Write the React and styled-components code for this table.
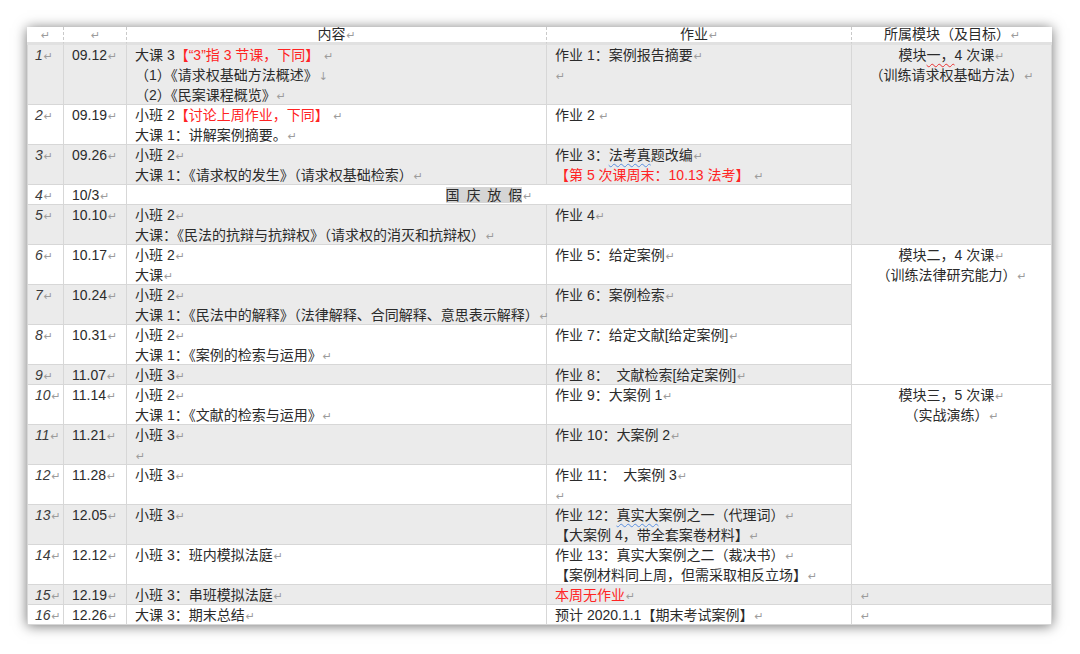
import React from 'react';
import styled, { createGlobalStyle } from 'styled-components';

const GlobalStyle = createGlobalStyle`
  html, body {
    margin: 0;
    padding: 0;
    background: #ffffff;
  }
  body {
    font-family: "Liberation Sans", "Noto Sans CJK SC", sans-serif;
    color: #2b2b2b;
  }
`;

const Page = styled.div`
  width: 1080px;
  height: 654px;
  box-sizing: border-box;
  padding: 27px 0 0 27px;
  overflow: hidden;
`;

const Sheet = styled.div`
  width: 1025px;
  background: #ffffff;
  box-shadow: 0 1px 12px rgba(0, 0, 0, 0.55);
`;

const Table = styled.table`
  width: 1025px;
  table-layout: fixed;
  border-collapse: separate;
  border-spacing: 0;
  font-size: 14px;
`;

const HeadCell = styled.td`
  padding: 0 8px;
  text-align: center;
  background: #ffffff;
  border-right: 1px dashed #c9c9c9;
  border-bottom: 3px solid #e1e1e1;

  &:last-child {
    border-right: none;
  }
`;

const HeadLine = styled.div`
  height: 15px;
  line-height: 15px;
  white-space: nowrap;
  overflow: hidden;
`;

const Cell = styled.td`
  padding: 0 8px;
  vertical-align: top;
  text-align: ${({ $center }) => ($center ? 'center' : 'left')};
  background: ${({ $shade }) => ($shade ? '#ebebeb' : '#ffffff')};
  border-right: 1px solid #d7d7d7;
  border-bottom: 1px solid #d7d7d7;
`;

const NumCell = styled(Cell)`
  padding-left: 7px;
  font-style: italic;
  white-space: nowrap;
  color: #3a3a3a;
  border-left: 1px solid #d7d7d7;
`;

const DateCell = styled(Cell)`
  padding-left: 8px;
  white-space: nowrap;
`;

const Line = styled.div`
  white-space: nowrap;
  height: 20px;
  line-height: 20px;

  &:last-child {
    height: 19px;
  }
`;

const Red = styled.span`
  color: #ff2424;
`;

const Squiggle = styled.span`
  text-decoration: underline wavy ${({ color }) => color};
  text-decoration-thickness: 1px;
  text-underline-offset: 3px;
`;

const Holiday = styled.span`
  background: #d5d5d5;
  word-spacing: 3px;
`;

const MarkGlyph = styled.span`
  font-family: "DejaVu Sans", sans-serif;
  font-style: normal;
  font-size: 11px;
  color: #9c9c9c;
  margin-left: 1px;
`;

// paragraph mark shown by Word (↵ / ↓)
const Mark = ({ br }) => <MarkGlyph>{br ? '↓' : '↵'}</MarkGlyph>;

const rows = [
  {
    n: '1', date: '09.12', shade: true,
    content: [
      <>大课 3<Red>【“3”指 3 节课，下同】</Red> <Mark /></>,
      <>（1）《请求权基础方法概述》<Mark br /></>,
      <>（2）《民案课程概览》<Mark /></>,
    ],
    work: [<>作业 1：案例报告摘要<Mark /></>, <Mark />],
    module: {
      span: 5, shade: true, center: true,
      lines: [
        <>模块<Squiggle color="#e83030">一，</Squiggle>4 次课<Mark /></>,
        <>（训练请求权基础方法）<Mark /></>,
      ],
    },
  },
  {
    n: '2', date: '09.19',
    content: [
      <>小班 2<Red>【讨论上周作业，下同】</Red> <Mark /></>,
      <>大课 1：讲解案例摘要。<Mark /></>,
    ],
    work: [<>作业 2 <Mark /></>],
  },
  {
    n: '3', date: '09.26', shade: true,
    content: [<>小班 2<Mark /></>, <>大课 1：《请求权的发生》（请求权基础检索）<Mark /></>],
    work: [
      <>作业 3：<Squiggle color="#5a8fe0">法考真</Squiggle>题改编<Mark /></>,
      <><Red>【第 5 次课周末：10.13 法考】</Red> <Mark /></>,
    ],
  },
  { n: '4', date: '10/3', holiday: '国 庆 放 假' },
  {
    n: '5', date: '10.10', shade: true,
    content: [<>小班 2<Mark /></>, <>大课：《民法的抗辩与抗辩权》（请求权的消灭和抗辩权）<Mark /></>],
    work: [<>作业 4<Mark /></>],
  },
  {
    n: '6', date: '10.17',
    content: [<>小班 2<Mark /></>, <>大课<Mark /></>],
    work: [<>作业 5：给定案例<Mark /></>],
    module: {
      span: 4, center: true,
      lines: [<>模块二，4 次课<Mark /></>, <>（训练法律研究能力）<Mark /></>],
    },
  },
  {
    n: '7', date: '10.24', shade: true,
    content: [<>小班 2<Mark /></>, <>大课 1：《民法中的解释》（法律解释、合同解释、意思表示解释）<Mark /></>],
    work: [<>作业 6：案例检索<Mark /></>],
  },
  {
    n: '8', date: '10.31',
    content: [<>小班 2<Mark /></>, <>大课 1：《案例的检索与运用》<Mark /></>],
    work: [<>作业 7：给定文献[给定案例]<Mark /></>],
  },
  {
    n: '9', date: '11.07', shade: true,
    content: [<>小班 3<Mark /></>],
    work: [<>作业 8：&nbsp;&nbsp;文献检索[给定案例]<Mark /></>],
  },
  {
    n: '10', date: '11.14',
    content: [<>小班 2<Mark /></>, <>大课 1：《文献的检索与运用》<Mark /></>],
    work: [<>作业 9：大案例 1<Mark /></>],
    module: {
      span: 5, center: true,
      lines: [<>模块三，5 次课<Mark /></>, <>（实战演练）<Mark /></>],
    },
  },
  {
    n: '11', date: '11.21', shade: true,
    content: [<>小班 3<Mark /></>, <Mark />],
    work: [<>作业 10：大案例 2<Mark /></>],
  },
  {
    n: '12', date: '11.28',
    content: [<>小班 3<Mark /></>],
    work: [<>作业 11：&nbsp;&nbsp;大案例 3<Mark /></>, <Mark />],
  },
  {
    n: '13', date: '12.05', shade: true,
    content: [<>小班 3<Mark /></>],
    work: [
      <>作业 12：<Squiggle color="#5a8fe0">真实大</Squiggle>案例之一（代理词）<Mark /></>,
      <>【大案例 4，带全套案卷材料】<Mark /></>,
    ],
  },
  {
    n: '14', date: '12.12',
    content: [<>小班 3：班内模拟法庭<Mark /></>],
    work: [<>作业 13：真实大案例之二（裁决书）<Mark /></>, <>【案例材料同上周，但需采取相反立场】<Mark /></>],
  },
  {
    n: '15', date: '12.19', shade: true,
    content: [<>小班 3：串班模拟法庭<Mark /></>],
    work: [<><Red>本周无作业</Red><Mark /></>],
    module: { span: 1, shade: true, lines: [<Mark />] },
  },
  {
    n: '16', date: '12.26',
    content: [<>大课 3：期末总结<Mark /></>],
    work: [<>预计 2020.1.1【期末考试案例】<Mark /></>],
    module: { span: 1, lines: [<Mark />] },
  },
];

const headers = ['', '', '内容', '作业', '所属模块（及目标）'];

const Lines = ({ items }) => items.map((l, i) => <Line key={i}>{l}</Line>);

const App = () => (
  <Page>
    <GlobalStyle />
    <Sheet>
      <Table>
        <colgroup>
          <col style={{ width: 37 }} />
          <col style={{ width: 63 }} />
          <col style={{ width: 420 }} />
          <col style={{ width: 305 }} />
          <col style={{ width: 200 }} />
        </colgroup>
        <thead>
          <tr>
            {headers.map((h, i) => (
              <HeadCell key={i}>
                <HeadLine>{h}<Mark /></HeadLine>
              </HeadCell>
            ))}
          </tr>
        </thead>
        <tbody>
          {rows.map((r) => (
            <tr key={r.n}>
              <NumCell $shade={r.shade}><Line>{r.n}<Mark /></Line></NumCell>
              <DateCell $shade={r.shade}><Line>{r.date}<Mark /></Line></DateCell>
              {r.holiday ? (
                <Cell colSpan={2} $center>
                  <Line><Holiday>{r.holiday}</Holiday><Mark /></Line>
                </Cell>
              ) : (
                <>
                  <Cell $shade={r.shade}><Lines items={r.content} /></Cell>
                  <Cell $shade={r.shade}><Lines items={r.work} /></Cell>
                </>
              )}
              {r.module && (
                <Cell rowSpan={r.module.span} $shade={r.module.shade} $center={r.module.center}>
                  <Lines items={r.module.lines} />
                </Cell>
              )}
            </tr>
          ))}
        </tbody>
      </Table>
    </Sheet>
  </Page>
);

export default App;
